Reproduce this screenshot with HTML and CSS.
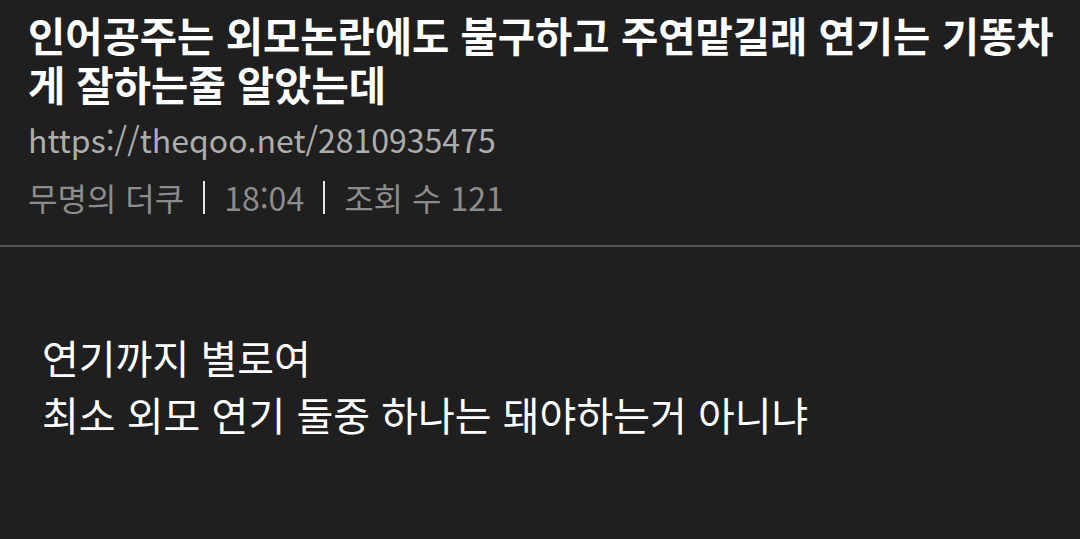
FILE: index.html
```html
<!DOCTYPE html>
<html lang="ko">
<head>
<meta charset="utf-8">
<link rel="stylesheet" href="styles.css">
</head>
<body>
<div class="page">
  <header class="head">
    <h1 class="title">인어공주는 외모논란에도 불구하고 주연맡길래 연기는 기똥차게 잘하는줄 알았는데</h1>
    <div class="url">https://theqoo.net/2810935475</div>
    <div class="meta">
      <span>무명의 더쿠</span>
      <span class="sep"></span>
      <span>18:04</span>
      <span class="sep"></span>
      <span>조회 수 121</span>
    </div>
  </header>
  <div class="divider"></div>
  <main class="body">
    <p>연기까지 별로여</p>
    <p>최소 외모 연기 둘중 하나는 돼야하는거 아니냐</p>
  </main>
</div>
</body>
</html>
```
FILE: styles.css
```css
* { box-sizing: border-box; }
html, body {
  margin: 0;
  padding: 0;
  background: #1f1f1f;
  overflow: hidden;
}
body {
  font-family: "Noto Sans CJK KR", "Noto Sans", sans-serif;
  color: #ffffff;
  width: 1080px;
  height: 539px;
}
.head {
  padding: 10px 24px 0 28px;
}
.title {
  margin: 0;
  font-size: 40.5px;
  font-weight: 700;
  line-height: 49px;
  color: #ffffff;
}
.url {
  margin-top: 9px;
  font-size: 32px;
  line-height: 44px;
  color: #adadad;
}
.meta {
  margin-top: 14px;
  display: flex;
  align-items: center;
  font-size: 32px;
  line-height: 44px;
  color: #8c8c8c;
}
.sep {
  display: inline-block;
  width: 2px;
  height: 33px;
  background: #e6e6e6;
  margin: 0 19px;
}
.divider {
  margin-top: 26px;
  height: 2px;
  background: #555555;
}
.body {
  padding: 82px 40px 0 42px;
}
.body p {
  margin: 0;
  font-size: 40px;
  line-height: 57px;
  color: #ffffff;
}
```
